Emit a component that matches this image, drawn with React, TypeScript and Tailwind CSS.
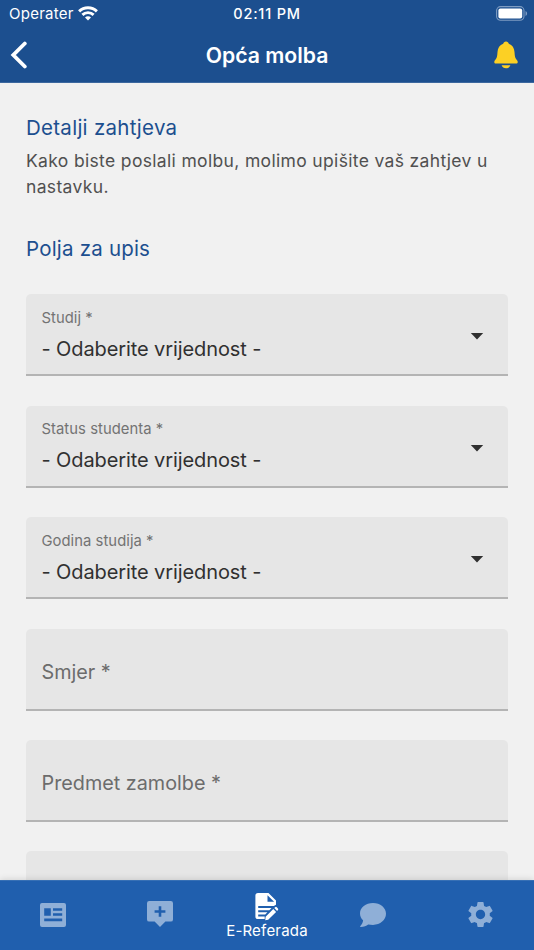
import type { ReactNode } from "react";
import { MdSettings } from "react-icons/md";

type FieldProps = {
  label: string;
  value?: string;
};

const fields: FieldProps[] = [
  { label: "Studij *", value: "- Odaberite vrijednost -" },
  { label: "Status studenta *", value: "- Odaberite vrijednost -" },
  { label: "Godina studija *", value: "- Odaberite vrijednost -" },
  { label: "Smjer *" },
  { label: "Predmet zamolbe *" },
  { label: "" },
];

function Field({ label, value }: FieldProps) {
  return (
    <div className="h-[82px] shrink-0 flex items-center justify-between rounded-t-[5px] border-b-2 border-[#b4b4b4] bg-[#e6e6e6] pl-[15.5px] pr-[24px]">
      {value ? (
        <>
          <div>
            <div className="text-[14.8px] leading-[20px] tracking-[0.05px] text-[#737373]">{label}</div>
            <div className="mt-[9px] text-[20px] leading-[24px] tracking-[-0.1px] text-[#303030]">{value}</div>
          </div>
          <svg width="14" height="7" viewBox="0 0 14 7" className="mt-[5px]">
            <path d="M0.8 0h12.4L7 6.6z" fill="#303030" />
          </svg>
        </>
      ) : (
        <div className="pt-[7px] text-[19.8px] leading-[24px] text-[#6c6c6c]">{label}</div>
      )}
    </div>
  );
}

function NavItem({ children, active }: { children: ReactNode; active?: boolean }) {
  return (
    <button className={active ? "flex-1 flex flex-col items-center pt-[12px] text-white" : "flex-1 flex justify-center pt-[20px] text-[#8fafd7]"}>
      {children}
    </button>
  );
}

export default function App() {
  return (
    <div className="h-[950px] w-[534px] flex flex-col overflow-hidden bg-[#f1f1f1] font-['Inter',sans-serif]">
      <header className="h-[83px] shrink-0 border-b border-[#3c689f] bg-[#1c4f8f] text-white">
        <div className="grid h-7 grid-cols-3 items-center pl-[9px] pr-[6px]">
          <div className="flex items-center gap-[5px] text-[15px] leading-[28px] tracking-[0.25px]">
            <span>Operater</span>
            <svg width="20" height="15" viewBox="0 0 20 15" fill="none" stroke="currentColor" strokeWidth="2.9" className="-mt-[2px] -ml-px">
              <path d="M1.1 5.4a12.6 12.6 0 0 1 17.8 0M4.4 8.9a8 8 0 0 1 11.2 0" />
              <path d="M10 14.5l-3-3a4.2 4.2 0 0 1 6 0z" fill="currentColor" stroke="none" />
            </svg>
          </div>
          <div className="pr-[3px] text-center text-[14.5px] font-medium leading-[28px] tracking-[0.8px]">02:11 PM</div>
          <svg width="32" height="15" viewBox="0 0 32 15" className="justify-self-end -mt-[1px]">
            <rect x="0.6" y="0.6" width="27.4" height="13.6" rx="4" fill="none" stroke="#7e9cc2" strokeWidth="1.1" />
            <rect x="2.4" y="2.4" width="23.8" height="10" rx="2" fill="#fff" />
            <path d="M29.5 5v5c1-.4 1.6-1.4 1.6-2.5S30.5 5.4 29.5 5z" fill="#7e9cc2" />
          </svg>
        </div>
        <div className="grid h-[54px] grid-cols-[60px_1fr_60px] items-center">
          <svg width="18" height="28" viewBox="0 0 18 28" className="ml-[10px] -mt-[1px]">
            <path d="M14.8 2.5L3.3 14l11.5 11.5" fill="none" stroke="#fff" strokeWidth="3.8" strokeLinecap="round" strokeLinejoin="miter" />
          </svg>
          <h1 className="text-center text-[21.2px] font-semibold leading-[28px]">Opća molba</h1>
          <svg width="24" height="28" viewBox="0 0 24 28" className="mr-[16px] -mt-[1px] justify-self-end">
            <path d="M12 .4c-1.500 0-2.600 1-2.800 2.300C5.700 3.900 3.700 7 3.500 11c-.2 4.500-.8 6.500-2.500 8.200-1.300 1.400-.8 3.300 1 3.300h20c1.800 0 2.300-1.900 1-3.300-1.700-1.700-2.300-3.700-2.500-8.200-.2-4-2.200-7.100-5.700-8.300C14.600 1.400 13.500.4 12 .4zM7.600 24.300h8.800c-.6 1.800-2.200 3-4.400 3s-3.800-1.200-4.400-3z" fill="#fcd024" />
          </svg>
        </div>
      </header>

      <main className="min-h-0 flex-1 overflow-hidden px-[26px] pt-[31.5px]">
        <h2 className="text-[20.5px] leading-[26px] tracking-[0.27px] text-[#1c4f8f]">Detalji zahtjeva</h2>
        <p className="mt-[7px] whitespace-nowrap text-[17.5px] leading-[26px] tracking-[0.34px] text-[#505050]">
          Kako biste poslali molbu, molimo upišite vaš zahtjev u<br />nastavku.
        </p>
        <h2 className="mt-[36px] text-[20.5px] leading-[26px] tracking-[0.2px] text-[#1c4f8f]">Polja za upis</h2>
        <div className="mt-[32.9px] flex flex-col gap-[29.4px]">
          {fields.map((field, i) => (
            <Field key={i} {...field} />
          ))}
        </div>
      </main>

      <nav className="relative flex h-[70px] shrink-0 border-t border-[#3770b5] bg-[#205fae] shadow-[0_-1px_6px_rgba(0,0,0,0.12)]">
        <NavItem>
          <svg width="26" height="24" viewBox="0 0 26 24" className="mt-[2px]" fill="currentColor">
            <path fillRule="evenodd" d="M2 0h22a2 2 0 0 1 2 2v20a2 2 0 0 1-2 2H2a2 2 0 0 1-2-2V2a2 2 0 0 1 2-2zM4.200 5.200v7.600h6.600V5.200zM13 5.200v2.600h9.200V5.200zM13 10.200v2.600h9.200v-2.600zM4.200 15.600v2.600h18v-2.600z" />
          </svg>
        </NavItem>
        <NavItem>
          <svg width="26" height="27" viewBox="0 0 26 27" className="-ml-[1px]" fill="currentColor">
            <path fillRule="evenodd" d="M2.200 0h21.600A2.200 2.200 0 0 1 26 2.200v16.200a2.200 2.200 0 0 1-2.200 2.200h-5.400L13 26l-5.400-5.400H2.200A2.200 2.200 0 0 1 0 18.400V2.200A2.200 2.200 0 0 1 2.200 0zM11.700 5.200v4H7.600v2.500h4.100v4.100h2.600v-4.100h4.100V9.200h-4.100v-4z" />
          </svg>
        </NavItem>
        <NavItem active>
          <svg width="24" height="28" viewBox="0 0 24 28" className="ml-[1px]" fill="currentColor">
            <path fillRule="evenodd" d="M3 0h10.500L21 7.500V11.800l-2.200 1.200H3.200v2h13.300l-2.100 2.200H3.200v2h9.200l-2.200 2.200H3.200v2h6.500v2.600H3a2.600 2.600 0 0 1-2.600-2.600V2.600A2.600 2.600 0 0 1 3 0zM12.500 2.200v6.600h6.600z" />
            <path d="M18.300 16.100l2.800 2.800-7.900 7.800-2.900.5.300-3.400zM19.300 15.100l.8-.8a1.200 1.200 0 0 1 1.700 0l1.100 1.100a1.200 1.200 0 0 1 0 1.700l-.8.8z" />
          </svg>
          <span className="mt-[1px] text-[15px] leading-[18px] tracking-[0.2px]">E-Referada</span>
        </NavItem>
        <NavItem>
          <svg width="26" height="25" viewBox="0 0 26 25" className="mt-[2px] -ml-[2px]" fill="currentColor">
            <path d="M13 0C5.800 0 0 4.600 0 10.400c0 2.700 1.200 5 3.100 6.900-.2 2.300-1.400 4.200-2.700 5.600-.5.500-.2 1.100.4 1.100 3.100 0 5.600-1.200 7.400-2.500 1.500.3 3.100.4 4.800.4 7.200 0 13-5 13-11.100S20.200 0 13 0z" />
          </svg>
        </NavItem>
        <NavItem>
          <MdSettings size={31} className="-mt-[2px] -ml-[1px]" />
        </NavItem>
      </nav>
    </div>
  );
}
